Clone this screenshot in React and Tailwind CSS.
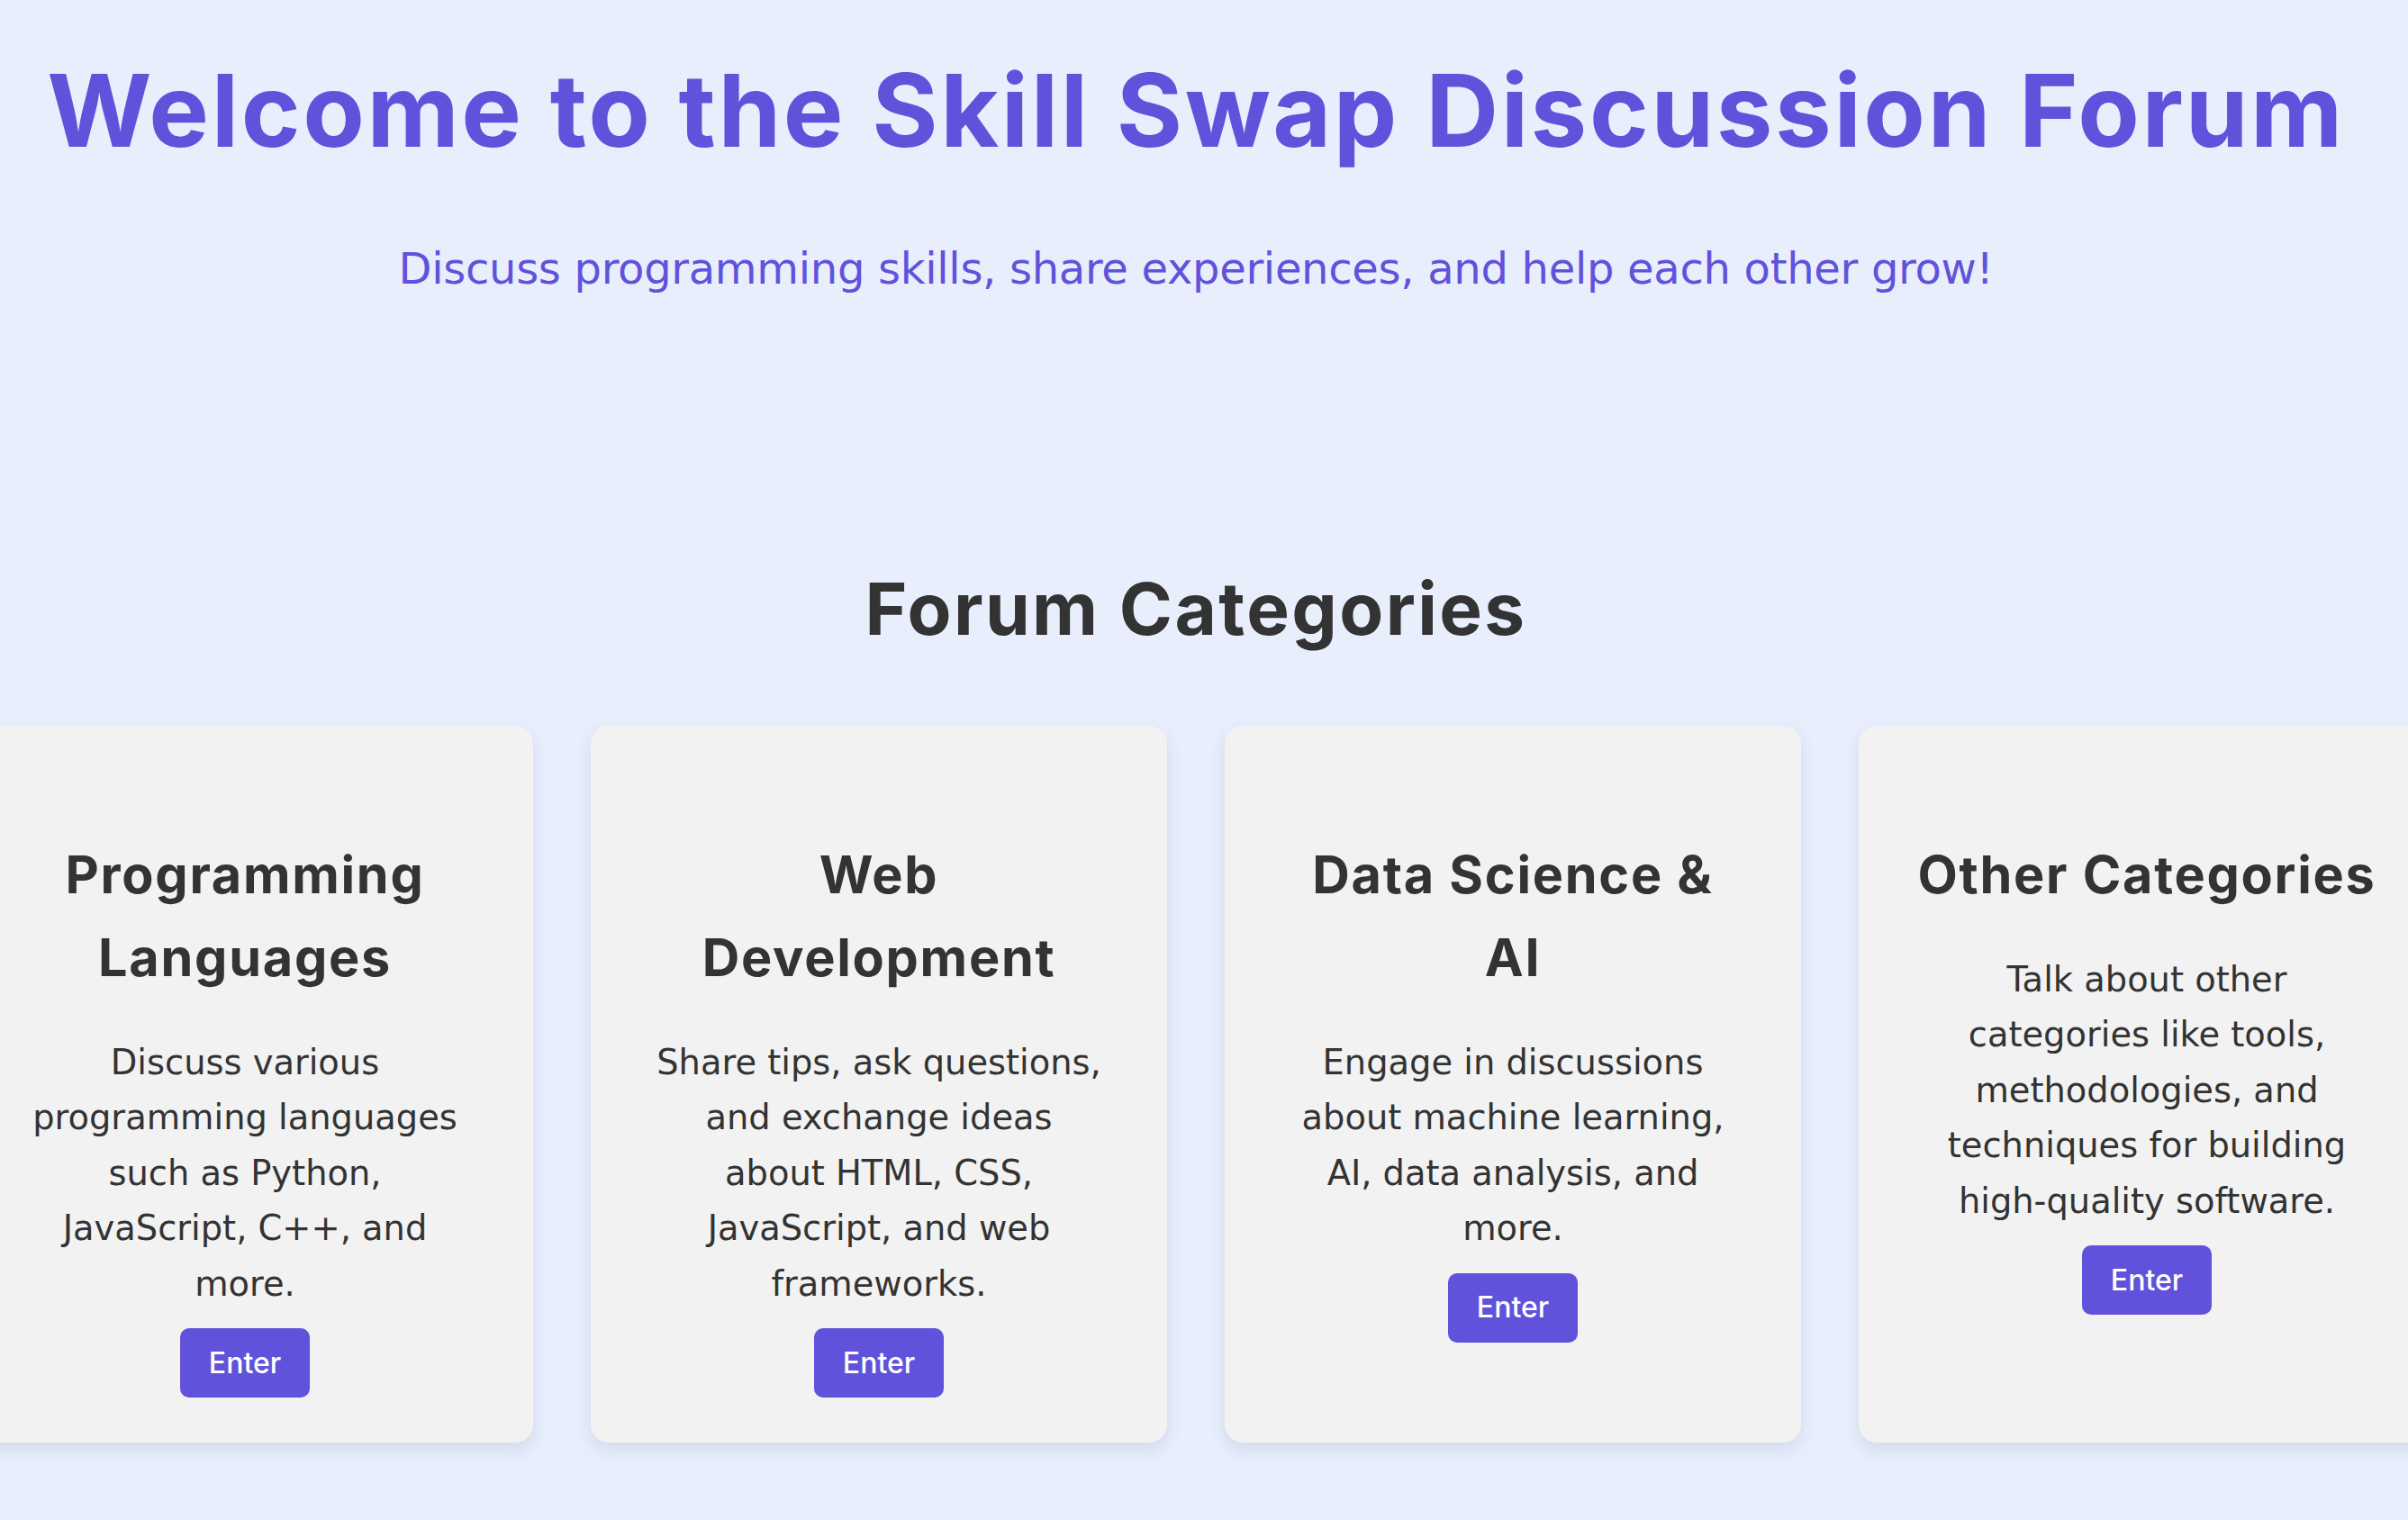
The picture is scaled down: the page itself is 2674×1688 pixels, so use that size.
import React from "react";

const categories = [
  {
    title: "Programming Languages",
    text: "Discuss various programming languages such as Python, JavaScript, C++, and more.",
  },
  {
    title: "Web Development",
    text: "Share tips, ask questions, and exchange ideas about HTML, CSS, JavaScript, and web frameworks.",
  },
  {
    title: "Data Science & AI",
    text: "Engage in discussions about machine learning, AI, data analysis, and more.",
  },
  {
    title: "Other Categories",
    text: "Talk about other categories like tools, methodologies, and techniques for building high-quality software.",
  },
];

const CategoryCard = ({ title, text }) => {
  return (
    <div className="w-[640px] shrink-0 bg-[#f2f2f2] rounded-[20px] shadow-[0_8px_18px_rgba(60,70,110,0.12)] px-[64px] pt-[119px] pb-[50px] flex flex-col items-center text-center">
      <h3 className="font-['Inter',sans-serif] font-bold text-[57.6px] leading-[92px] tracking-[0.03em] text-[#333]">
        {title}
      </h3>
      <p className="mt-[40px] px-[6px] font-['DejaVu_Sans',sans-serif] text-[38.4px] leading-[61.44px] text-[#333]">
        {text}
      </p>
      <button className="mt-[19px] h-[77px] px-[32px] rounded-[10px] bg-[#6152dc] text-white font-['Inter',sans-serif] font-medium text-[32px]">
        Enter
      </button>
    </div>
  );
};

export default function App() {
  return (
    <div className="min-h-screen w-full overflow-hidden bg-[#e8eefc]">
      <div className="w-[2656px] pb-[86px]">
        <header className="text-center">
          <h1 className="pt-[55px] font-['Inter',sans-serif] font-bold text-[112px] leading-[134px] tracking-[2.6px] text-[#6152dc]">
            Welcome to the Skill Swap Discussion Forum
          </h1>
          <p className="mt-[71px] font-['DejaVu_Sans',sans-serif] text-[48px] leading-[77px] tracking-[-0.3px] text-[#6152dc]">
            Discuss programming skills, share experiences, and help each other grow!
          </p>
        </header>

        <section className="mt-[291px]">
          <h2 className="text-center font-['Inter',sans-serif] font-bold text-[80px] leading-[96px] tracking-[0.03em] text-[#333]">
            Forum Categories
          </h2>
          <div className="mt-[82px] flex justify-center gap-[64px]">
            {categories.map((item, index) => (
              <CategoryCard key={index} title={item.title} text={item.text} />
            ))}
          </div>
        </section>
      </div>
    </div>
  );
}
